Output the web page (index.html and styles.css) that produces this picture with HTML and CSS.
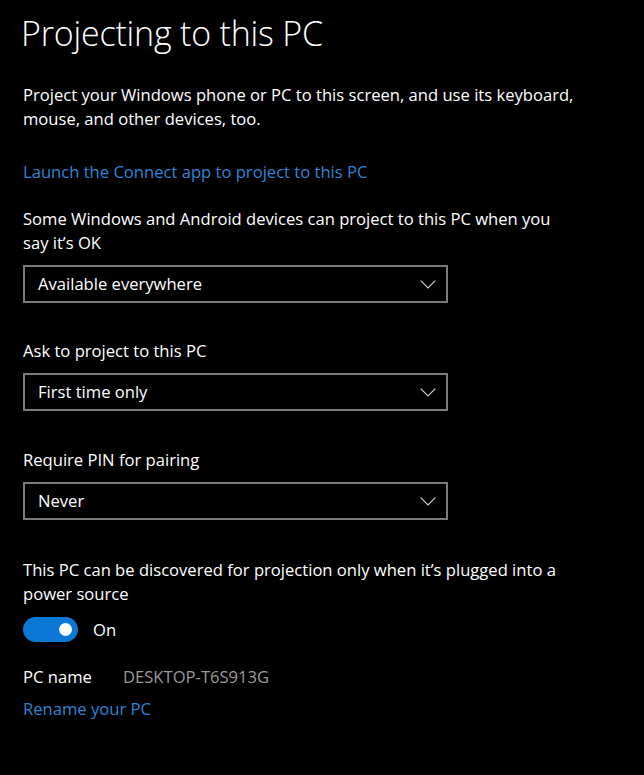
FILE: index.html
```html
<!DOCTYPE html>
<html lang="en">
<head>
<meta charset="utf-8">
<title>Projecting to this PC</title>
<link rel="stylesheet" href="styles.css">
</head>
<body>
<main class="page">
  <h1 class="title">Projecting to this PC</h1>
  <p class="intro">Project your Windows phone or PC to this screen, and use its keyboard, mouse, and other devices, too.</p>
  <a class="link link-launch" href="#">Launch the Connect app to project to this PC</a>

  <p class="label label-first">Some Windows and Android devices can project to this PC when you say it’s OK</p>
  <div class="select">
    <span class="select-text">Available everywhere</span>
    <svg class="chevron" width="16" height="9" viewBox="0 0 16 9"><path d="M0.7 0.7 L8 8 L15.3 0.7" fill="none" stroke="#d0d0d0" stroke-width="1.2"/></svg>
  </div>

  <p class="label label-ask">Ask to project to this PC</p>
  <div class="select">
    <span class="select-text">First time only</span>
    <svg class="chevron" width="16" height="9" viewBox="0 0 16 9"><path d="M0.7 0.7 L8 8 L15.3 0.7" fill="none" stroke="#d0d0d0" stroke-width="1.2"/></svg>
  </div>

  <p class="label">Require PIN for pairing</p>
  <div class="select">
    <span class="select-text">Never</span>
    <svg class="chevron" width="16" height="9" viewBox="0 0 16 9"><path d="M0.7 0.7 L8 8 L15.3 0.7" fill="none" stroke="#d0d0d0" stroke-width="1.2"/></svg>
  </div>

  <p class="label label-power">This PC can be discovered for projection only when it’s plugged into a power source</p>
  <div class="toggle-row">
    <span class="toggle"><span class="knob"></span></span>
    <span class="toggle-text">On</span>
  </div>

  <div class="name-row">
    <span class="name-key">PC name</span>
    <span class="name-value">DESKTOP-T6S913G</span>
  </div>
  <a class="link link-rename" href="#">Rename your PC</a>
</main>
</body>
</html>
```
FILE: styles.css
```css
html, body {
  margin: 0;
  padding: 0;
  background: #000;
}

body {
  color: #fff;
  font-family: "Open Sans", "Noto Sans", sans-serif;
  font-size: 16.6px;
  line-height: 24px;
}

.page {
  display: flex;
  flex-direction: column;
  align-items: flex-start;
  padding: 0 0 40px 23px;
  width: 553px;
}

.title {
  font-size: 34px;
  font-weight: 300;
  line-height: 40px;
  margin: 13px 0 0 -2px;
  letter-spacing: -0.2px;
  white-space: nowrap;
}

.intro {
  margin: 30px 0 0;
}

.link {
  color: #2f85d4;
  text-decoration: none;
}

.link-launch {
  margin-top: 29px;
}

.label {
  margin: 37px 0 0;
}

.label-first {
  margin-top: 23px;
}

.label-ask {
  margin-top: 36px;
}

.label-power {
  margin-top: 38px;
}

.select {
  margin-top: 10px;
  box-sizing: border-box;
  width: 425px;
  height: 38px;
  border: 2px solid #7b7b7b;
  display: flex;
  align-items: center;
  justify-content: space-between;
  padding: 0 10px 0 13px;
}

.chevron {
  display: block;
}

.toggle-row {
  margin-top: 11px;
  display: flex;
  align-items: center;
  gap: 15px;
}

.toggle {
  width: 55px;
  height: 25px;
  border-radius: 13px;
  background: #0a78d4;
  display: flex;
  align-items: center;
  justify-content: flex-end;
  padding-right: 6px;
  box-sizing: border-box;
}

.knob {
  width: 13px;
  height: 13px;
  border-radius: 50%;
  background: #fff;
}

.name-row {
  margin-top: 23px;
  display: flex;
}

.name-key {
  width: 100px;
}

.name-value {
  color: #9a9a9a;
}

.link-rename {
  margin-top: 8px;
}
```
